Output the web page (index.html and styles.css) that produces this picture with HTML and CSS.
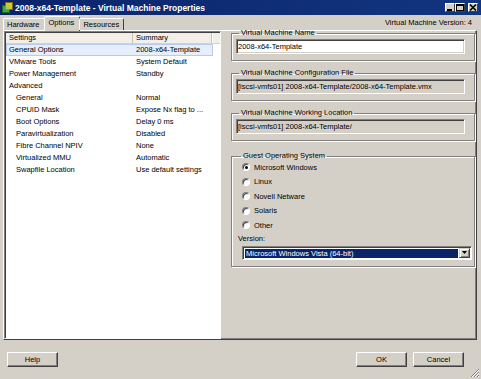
FILE: index.html
```html
<!DOCTYPE html>
<html lang="en">
<head>
  <meta charset="UTF-8" />
  <title>2008-x64-Template - Virtual Machine Properties</title>
  <link rel="stylesheet" href="styles.css">
</head>
<body>
  <div class="window">

    <div class="titlebar">
      <svg class="app-icon" width="11" height="11" viewBox="0 0 11 11">
        <rect x="0.5" y="3.5" width="7" height="7" fill="#4aa24a" stroke="#1f6a1f"/>
        <rect x="3.5" y="0.5" width="7" height="7" fill="#e8c42a" stroke="#7c6a10"/>
        <rect x="3.5" y="3.5" width="4" height="4" fill="#9fd04a"/>
      </svg>
      <span class="title">2008-x64-Template - Virtual Machine Properties</span>
      <div class="caption-buttons">
        <span class="cap-btn">
          <svg width="8" height="7" viewBox="0 0 8 7"><rect x="1" y="5" width="5" height="2" fill="#000"/></svg>
        </span>
        <span class="cap-btn">
          <svg width="8" height="7" viewBox="0 0 8 7"><rect x="0.5" y="0.5" width="7" height="6" fill="none" stroke="#000"/><rect x="0" y="0" width="8" height="2" fill="#000"/></svg>
        </span>
        <span class="cap-btn close">
          <svg width="8" height="7" viewBox="0 0 8 7"><path d="M1 0.5 L7 6.5 M7 0.5 L1 6.5" stroke="#000" stroke-width="1.6"/></svg>
        </span>
      </div>
    </div>

    <div class="tabbar">
      <div class="tabs">
        <div class="tab">Hardware</div>
        <div class="tab active">Options</div>
        <div class="tab last">Resources</div>
      </div>
      <div class="version">Virtual Machine Version: 4</div>
    </div>

    <div class="page">
      <div class="list">
        <div class="list-head">
          <div class="head-cell settings">Settings</div>
          <div class="head-cell summary">Summary</div>
          <div class="head-cell extra"></div>
        </div>
        <div class="row selected"><span class="name">General Options</span><span class="value">2008-x64-Template</span></div>
        <div class="row"><span class="name">VMware Tools</span><span class="value">System Default</span></div>
        <div class="row"><span class="name">Power Management</span><span class="value">Standby</span></div>
        <div class="row"><span class="name">Advanced</span><span class="value"></span></div>
        <div class="row sub"><span class="name">General</span><span class="value">Normal</span></div>
        <div class="row sub"><span class="name">CPUID Mask</span><span class="value">Expose Nx flag to ...</span></div>
        <div class="row sub"><span class="name">Boot Options</span><span class="value">Delay 0 ms</span></div>
        <div class="row sub"><span class="name">Paravirtualization</span><span class="value">Disabled</span></div>
        <div class="row sub"><span class="name">Fibre Channel NPIV</span><span class="value">None</span></div>
        <div class="row sub"><span class="name">Virtualized MMU</span><span class="value">Automatic</span></div>
        <div class="row sub"><span class="name">Swapfile Location</span><span class="value">Use default settings</span></div>
      </div>

      <div class="details">
        <fieldset class="group first">
          <legend>Virtual Machine Name</legend>
          <div class="field editable">2008-x64-Template</div>
        </fieldset>

        <fieldset class="group">
          <legend>Virtual Machine Configuration File</legend>
          <div class="field">[iscsi-vmfs01] 2008-x64-Template/2008-x64-Template.vmx</div>
        </fieldset>

        <fieldset class="group">
          <legend>Virtual Machine Working Location</legend>
          <div class="field">[iscsi-vmfs01] 2008-x64-Template/</div>
        </fieldset>

        <fieldset class="group os">
          <legend>Guest Operating System</legend>
          <div class="radio-row"><span class="radio checked"></span>Microsoft Windows</div>
          <div class="radio-row"><span class="radio"></span>Linux</div>
          <div class="radio-row"><span class="radio"></span>Novell Netware</div>
          <div class="radio-row"><span class="radio"></span>Solaris</div>
          <div class="radio-row"><span class="radio"></span>Other</div>
          <div class="version-label">Version:</div>
          <div class="combo">
            <span class="combo-value">Microsoft Windows Vista (64-bit)</span>
            <span class="combo-btn">
              <svg width="5" height="3" viewBox="0 0 5 3"><path d="M0 0 H5 L2.5 3 Z" fill="#000"/></svg>
            </span>
          </div>
        </fieldset>
      </div>
    </div>

    <div class="footer">
      <button class="btn">Help</button>
      <div class="footer-right">
        <button class="btn">OK</button>
        <button class="btn">Cancel</button>
      </div>
      <svg class="grip" width="10" height="10" viewBox="0 0 10 10">
        <path d="M9 1 L1 9 M9 4 L4 9 M9 7 L7 9" stroke="#808080" stroke-width="1"/>
        <path d="M9 2 L2 9 M9 5 L5 9 M9 8 L8 9" stroke="#fff" stroke-width="1"/>
      </svg>
    </div>

  </div>
</body>
</html>
```

FILE: styles.css
```css
* {
  box-sizing: border-box;
}
html, body {
  margin: 0;
  padding: 0;
}
body {
  font-family: "Liberation Sans", Arial, sans-serif;
  font-size: 7.5px;
  color: #000;
  background: #d4d0c8;
}
.window {
  width: 481px;
  height: 379px;
  background: #d4d0c8;
  display: flex;
  flex-direction: column;
}

/* title bar */
.titlebar {
  height: 15px;
  background: linear-gradient(90deg, #0a246a, #123580);
  display: flex;
  align-items: center;
  padding: 0 3px 0 2px;
}
.app-icon {
  flex: none;
}
.title {
  color: #fff;
  font-weight: bold;
  font-size: 8.5px;
  margin-left: 2px;
  flex: 1;
  white-space: nowrap;
}
.caption-buttons {
  display: flex;
}
.cap-btn {
  width: 10px;
  height: 9px;
  background: #d4d0c8;
  border: 1px solid;
  border-color: #fff #404040 #404040 #fff;
  display: flex;
  align-items: center;
  justify-content: center;
}
.cap-btn.close {
  margin-left: 3px;
}

/* tabs */
.tabbar {
  height: 15px;
  display: flex;
  justify-content: space-between;
  align-items: flex-end;
  padding: 0 9px 0 3px;
}
.tabs {
  display: flex;
  align-items: flex-end;
  position: relative;
  z-index: 1;
}
.tab {
  height: 12px;
  line-height: 11px;
  padding: 0 4px 0 3px;
  border: 1px solid;
  border-bottom: none;
  border-color: #fff #808080 transparent #fff;
  border-radius: 2px 2px 0 0;
}
.tab.active {
  height: 15px;
  line-height: 12px;
  margin: 0 -1px -1px;
  padding: 0 5px 0 4px;
  background: #d4d0c8;
  border-right-color: #404040;
}
.tab.last {
  border-right-color: #404040;
}
.version {
  line-height: 14px;
}

/* tab page */
.page {
  height: 310px;
  margin: 0 4px 0 3px;
  border: 1px solid;
  border-color: #fff #404040 #404040 #fff;
  box-shadow: inset -1px -1px #808080;
  display: flex;
}
.list {
  width: 217px;
  background: #fff;
  border: 1px solid;
  border-color: #808080 #fff #fff #808080;
  box-shadow: inset 1px 1px #404040;
  padding: 1px 0 0 1px;
}
.list-head {
  display: flex;
  height: 11px;
  line-height: 10px;
  background: #f1efe7;
  border-bottom: 1px solid #d6d3c6;
}
.head-cell {
  border-right: 1px solid #c6c3b6;
}
.head-cell.settings {
  width: 127px;
  padding-left: 3px;
}
.head-cell.summary {
  width: 79px;
  padding-left: 3px;
}
.head-cell.extra {
  width: 7px;
  border-right: none;
  border-left: 1px solid #fff;
}
.row {
  display: flex;
  width: 207px;
  height: 12px;
  line-height: 12px;
  white-space: nowrap;
}
.row.selected {
  background: #e6eefb;
  border: 1px solid #b9cbe9;
  line-height: 10px;
}
.row .name {
  width: 130px;
  padding-left: 3px;
}
.row.selected .name {
  width: 129px;
  padding-left: 2px;
}
.row.sub .name {
  padding-left: 10px;
}

/* right side */
.details {
  flex: 1;
  padding: 0 1px 0 10px;
  display: flex;
  flex-direction: column;
}
.group {
  margin: 0 0 8px;
  padding: 0 9px 6px 4px;
  border: 1px solid #808080;
  box-shadow: inset 1px 1px #fff, 1px 1px #fff;
}
.group.first {
  margin-top: -2px;
}
.group legend {
  padding: 0 2px;
  margin-left: 3px;
  line-height: 8px;
}
.field {
  margin-top: 2px;
  height: 15px;
  line-height: 13px;
  padding-left: 1px;
  border: 1px solid;
  border-color: #808080 #fff #fff #808080;
  box-shadow: inset 1px 1px #404040, inset -1px -1px #d4d0c8;
  white-space: nowrap;
  overflow: hidden;
}
.field.editable {
  background: #fff;
}
.group.os {
  margin-top: 3px;
  padding: 0 2px 6px 6px;
}
.radio-row {
  height: 14.5px;
  display: flex;
  align-items: center;
  padding-left: 4px;
}
.radio {
  width: 8px;
  height: 8px;
  margin-right: 4px;
  border-radius: 50%;
  background: #fff;
  border: 1px solid;
  border-color: #808080 #fff #fff #808080;
  box-shadow: inset 1px 1px #404040;
  display: flex;
  align-items: center;
  justify-content: center;
}
.radio.checked::after {
  content: "";
  width: 3px;
  height: 3px;
  border-radius: 50%;
  background: #000;
}
.version-label {
  height: 10px;
  line-height: 10px;
  margin-top: 1px;
}
.combo {
  margin: 2px 0 0 4px;
  height: 14px;
  display: flex;
  border: 1px solid;
  border-color: #808080 #fff #fff #808080;
  box-shadow: inset 1px 1px #404040;
  background: #fff;
  padding: 2px 1px 1px 2px;
}
.combo-value {
  flex: 1;
  background: #0a246a;
  color: #fff;
  line-height: 9px;
  padding-left: 1px;
  margin-right: 1px;
}
.combo-btn {
  width: 11px;
  margin-top: -1px;
  background: #d4d0c8;
  border: 1px solid;
  border-color: #d4d0c8 #404040 #404040 #d4d0c8;
  box-shadow: inset 1px 1px #fff, inset -1px -1px #808080;
  display: flex;
  align-items: center;
  justify-content: center;
}

/* footer */
.footer {
  flex: 1;
  display: flex;
  justify-content: space-between;
  align-items: flex-start;
  padding: 12px 17px 0 7px;
  position: relative;
}
.footer-right {
  display: flex;
  gap: 6px;
}
.btn {
  width: 51px;
  height: 15px;
  padding: 0;
  font-family: "Liberation Sans", Arial, sans-serif;
  font-size: 7.5px;
  color: #000;
  background: #d4d0c8;
  border: 1px solid;
  border-color: #fff #404040 #404040 #fff;
  box-shadow: inset -1px -1px #808080;
}
.grip {
  position: absolute;
  right: 1px;
  bottom: 1px;
}
```
